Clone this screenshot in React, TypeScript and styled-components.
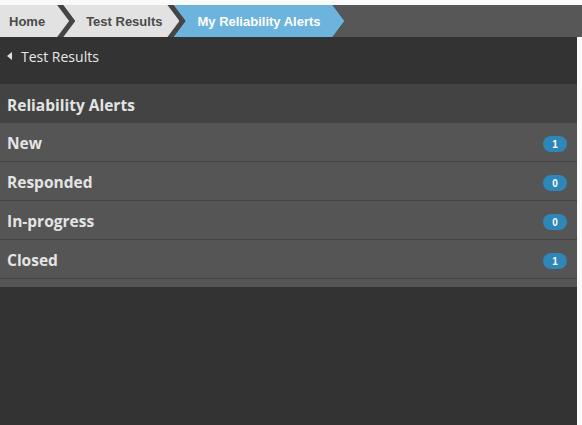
import React from "react";
import styled, { createGlobalStyle } from "styled-components";

const Global = createGlobalStyle`
  html, body { margin: 0; padding: 0; background: #fafafa; }
  body { font-family: "Open Sans", "Liberation Sans", sans-serif; }
`;

const Page = styled.div`
  padding-top: 5px;
  width: 582px;
`;

const Breadcrumbs = styled.nav`
  display: flex;
  height: 32px;
  background: #575757;
`;

const D = 12;
const T = 6;

const shape = (first?: boolean) =>
  first
    ? `polygon(0 0, calc(100% - ${D}px) 0, 100% 50%, calc(100% - ${D}px) 100%, 0 100%)`
    : `polygon(0 0, calc(100% - ${D}px) 0, 100% 50%, calc(100% - ${D}px) 100%, 0 100%, ${D}px 50%)`;

const Crumb = styled.div<{ $first?: boolean; $last?: boolean }>`
  display: flex;
  height: 32px;
  padding-right: ${(p) => (p.$last ? 0 : T)}px;
  margin-left: ${(p) => (p.$first ? 0 : -D)}px;
  background: #454545;
  clip-path: ${(p) => shape(p.$first)};
`;

const CrumbInner = styled.div<{ $first?: boolean; $active?: boolean; $pl: number; $pr: number }>`
  display: flex;
  align-items: center;
  height: 32px;
  padding: 0 ${(p) => p.$pr}px 0 ${(p) => p.$pl}px;
  background: ${(p) => (p.$active ? "#6cb3dd" : "#e2e2e2")};
  color: ${(p) => (p.$active ? "#ffffff" : "#4a4a4a")};
  font-family: "Liberation Sans", Arial, sans-serif;
  font-weight: bold;
  font-size: 13px;
  white-space: nowrap;
  clip-path: ${(p) => shape(p.$first)};
`;

const Main = styled.main`
  width: 577px;
  min-height: 388px;
  background: #333333;
`;

const BackRow = styled.div`
  display: flex;
  align-items: center;
  height: 47px;
  padding: 0 0 9px 7px;
  color: #e8e8e8;
  font-size: 14px;
  gap: 9px;
  box-sizing: border-box;
`;

const BackArrow = styled.span`
  width: 0;
  height: 0;
  border-top: 4px solid transparent;
  border-bottom: 4px solid transparent;
  border-right: 5px solid #e0e0e0;
`;

const Panel = styled.section`
  background: #555555;
  padding-bottom: 8px;
`;

const Header = styled.div`
  display: flex;
  align-items: center;
  height: 39px;
  padding: 2px 0 0 7px;
  background: #434343;
  color: #e4e4e4;
  font-weight: bold;
  font-size: 15.5px;
  box-sizing: border-box;
`;

const Row = styled.div`
  display: flex;
  align-items: center;
  justify-content: space-between;
  height: 39px;
  padding: 2px 10px 0 7px;
  border-bottom: 1px solid #444444;
  box-sizing: border-box;
  color: #e4e4e4;
  font-weight: bold;
  font-size: 15.5px;
`;

const Badge = styled.span`
  display: inline-flex;
  align-items: center;
  justify-content: center;
  width: 24px;
  height: 16px;
  border-radius: 8px;
  background: #2f86b8;
  color: #ffffff;
  font-family: "Liberation Sans", Arial, sans-serif;
  font-weight: bold;
  font-size: 10px;
  margin-top: 2px;
`;

const items = [
  { label: "New", count: 1 },
  { label: "Responded", count: 0 },
  { label: "In-progress", count: 0 },
  { label: "Closed", count: 1 },
];

export default function App() {
  return (
    <>
      <Global />
      <Page>
        <Breadcrumbs>
          <Crumb $first>
            <CrumbInner $first $pl={9} $pr={24}>Home</CrumbInner>
          </Crumb>
          <Crumb>
            <CrumbInner $pl={23} $pr={17}>Test Results</CrumbInner>
          </Crumb>
          <Crumb $last>
            <CrumbInner $active $pl={24} $pr={24}>My Reliability Alerts</CrumbInner>
          </Crumb>
        </Breadcrumbs>
        <Main>
          <BackRow>
            <BackArrow />
            <span>Test Results</span>
          </BackRow>
          <Panel>
            <Header>Reliability Alerts</Header>
            {items.map((it) => (
              <Row key={it.label}>
                <span>{it.label}</span>
                <Badge>{it.count}</Badge>
              </Row>
            ))}
          </Panel>
        </Main>
      </Page>
    </>
  );
}
